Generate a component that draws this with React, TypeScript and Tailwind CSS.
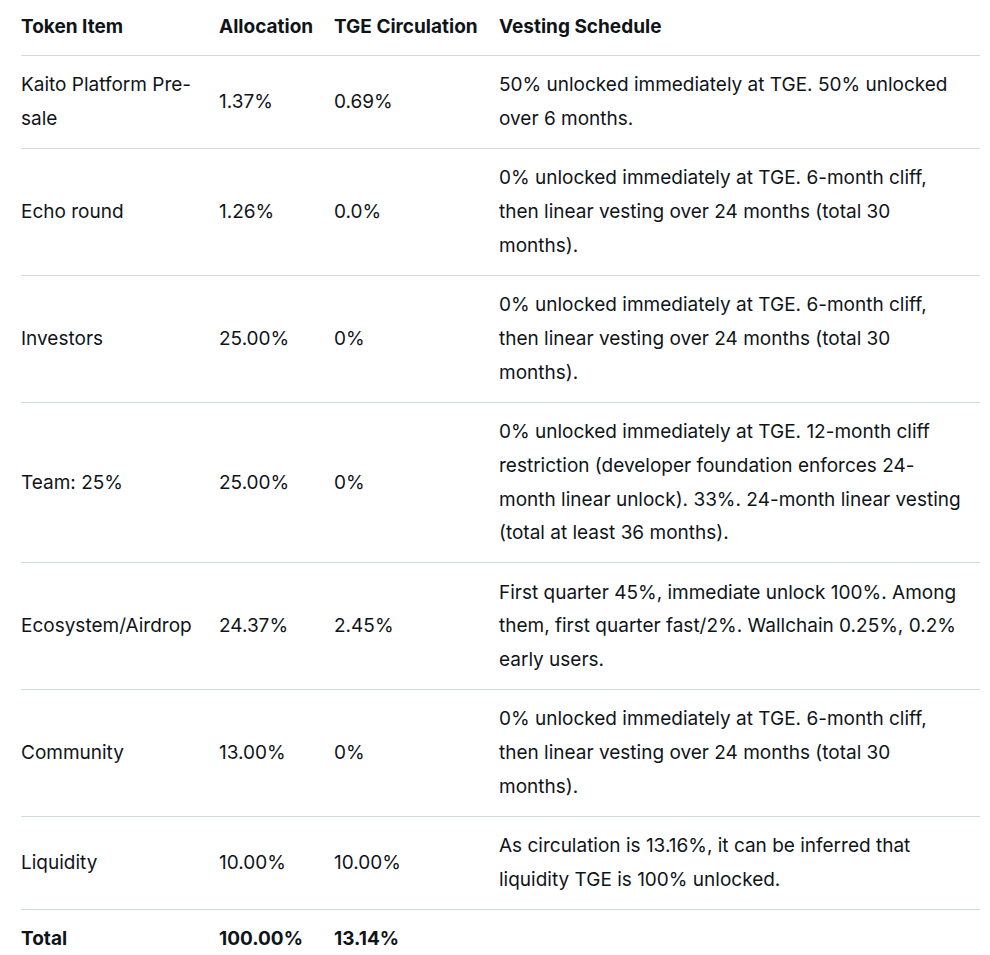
import React from 'react';

const rows = [
  { item: "Kaito Platform Pre-sale", alloc: "1.37%", tge: "0.69%", vesting: "50% unlocked immediately at TGE. 50% unlocked over 6 months." },
  { item: "Echo round", alloc: "1.26%", tge: "0.0%", vesting: "0% unlocked immediately at TGE. 6-month cliff, then linear vesting over 24 months (total 30 months)." },
  { item: "Investors", alloc: "25.00%", tge: "0%", vesting: "0% unlocked immediately at TGE. 6-month cliff, then linear vesting over 24 months (total 30 months)." },
  { item: "Team: 25%", alloc: "25.00%", tge: "0%", vesting: "0% unlocked immediately at TGE. 12-month cliff restriction (developer foundation enforces 24-month linear unlock). 33%. 24-month linear vesting (total at least 36 months)." },
  { item: "Ecosystem/Airdrop", alloc: "24.37%", tge: "2.45%", vesting: "First quarter 45%, immediate unlock 100%. Among them, first quarter fast/2%. Wallchain 0.25%, 0.2% early users." },
  { item: "Community", alloc: "13.00%", tge: "0%", vesting: "0% unlocked immediately at TGE. 6-month cliff, then linear vesting over 24 months (total 30 months)." },
  { item: "Liquidity", alloc: "10.00%", tge: "10.00%", vesting: "As circulation is 13.16%, it can be inferred that liquidity TGE is 100% unlocked." },
];

const cols = "grid grid-cols-[198px_115px_165px_1fr] items-center";

export default function App() {
  return (
    <div className="min-h-screen bg-white font-['Inter',sans-serif] text-[19px] leading-[33.85px] text-[#0f1419]">
      <div className="ml-[21px] w-[959px]">
        <div className={`${cols} pt-[10px] pb-[11.15px] border-b border-[#cfd9de] font-bold`}>
          <div className="pr-3">Token Item</div>
          <div className="pr-3">Allocation</div>
          <div className="pr-3">TGE Circulation</div>
          <div className="pr-4">Vesting Schedule</div>
        </div>
        {rows.map((r) => (
          <div key={r.item} className={`${cols} pt-[12.3px] pb-[12px] border-b border-[#cfd9de]`}>
            <div className="pr-3">{r.item}</div>
            <div className="pr-3">{r.alloc}</div>
            <div className="pr-3">{r.tge}</div>
            <div className="pr-4">{r.vesting}</div>
          </div>
        ))}
        <div className={`${cols} pt-[12.3px] pb-[12px] font-bold`}>
          <div className="pr-3">Total</div>
          <div className="pr-3">100.00%</div>
          <div className="pr-3">13.14%</div>
          <div className="pr-4"></div>
        </div>
      </div>
    </div>
  );
}
